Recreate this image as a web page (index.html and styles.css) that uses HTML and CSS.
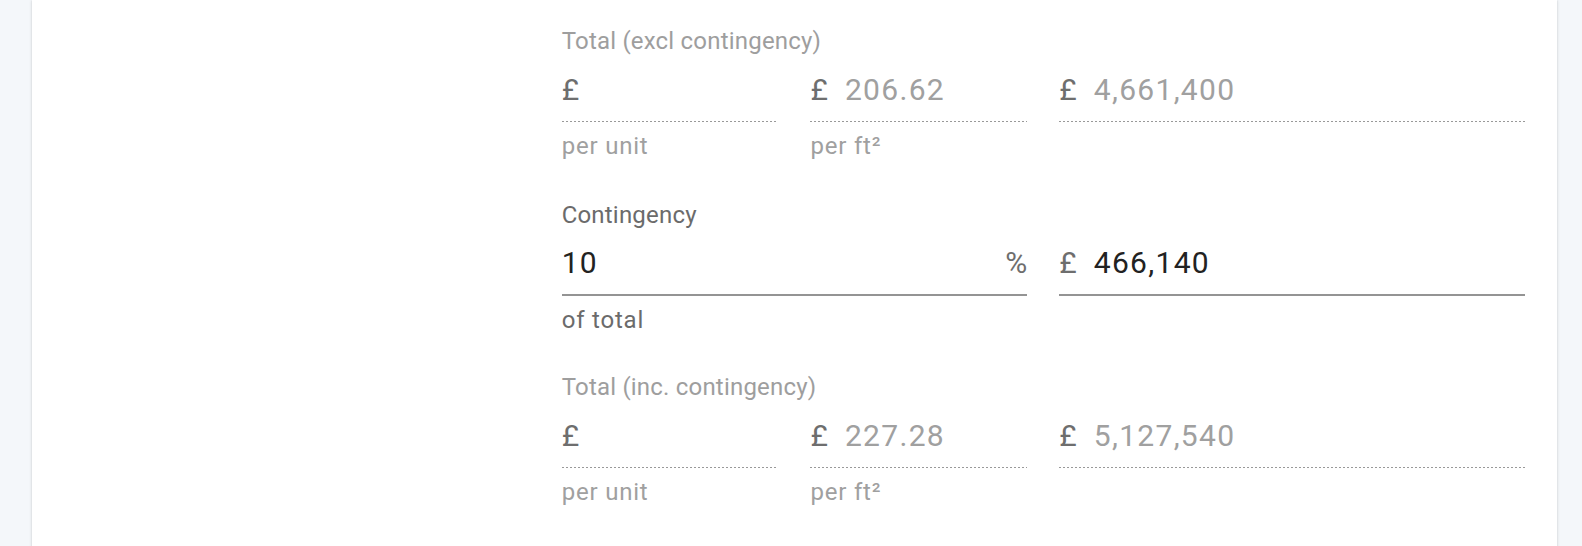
FILE: index.html
```html
<!DOCTYPE html>
<html lang="en">
<head>
<meta charset="utf-8">
<title>Costs</title>
<link rel="stylesheet" href="styles.css">
</head>
<body>
<main class="card">
  <section class="section">
    <div class="spacer"></div>
    <div class="group">
      <div class="label label-disabled">Total (excl contingency)</div>
      <div class="pair">
        <div class="field">
          <div class="input-row dotted">
            <span class="prefix">£</span>
            <span class="value value-disabled"></span>
          </div>
          <div class="hint hint-disabled">per unit</div>
        </div>
        <div class="field">
          <div class="input-row dotted">
            <span class="prefix">£</span>
            <span class="value value-disabled">206.62</span>
          </div>
          <div class="hint hint-disabled">per ft²</div>
        </div>
      </div>
    </div>
    <div class="group">
      <div class="label">&nbsp;</div>
      <div class="field">
        <div class="input-row dotted">
          <span class="prefix">£</span>
          <span class="value value-disabled">4,661,400</span>
        </div>
      </div>
    </div>
  </section>

  <section class="section section-contingency">
    <div class="spacer"></div>
    <div class="group">
      <div class="label label-active">Contingency</div>
      <div class="field">
        <div class="input-row solid">
          <span class="value value-active">10</span>
          <span class="suffix">%</span>
        </div>
        <div class="hint hint-active">of total</div>
      </div>
    </div>
    <div class="group">
      <div class="label">&nbsp;</div>
      <div class="field">
        <div class="input-row solid">
          <span class="prefix">£</span>
          <span class="value value-active">466,140</span>
        </div>
      </div>
    </div>
  </section>

  <section class="section">
    <div class="spacer"></div>
    <div class="group">
      <div class="label label-disabled">Total (inc. contingency)</div>
      <div class="pair">
        <div class="field">
          <div class="input-row dotted">
            <span class="prefix">£</span>
            <span class="value value-disabled"></span>
          </div>
          <div class="hint hint-disabled">per unit</div>
        </div>
        <div class="field">
          <div class="input-row dotted">
            <span class="prefix">£</span>
            <span class="value value-disabled">227.28</span>
          </div>
          <div class="hint hint-disabled">per ft²</div>
        </div>
      </div>
    </div>
    <div class="group">
      <div class="label">&nbsp;</div>
      <div class="field">
        <div class="input-row dotted">
          <span class="prefix">£</span>
          <span class="value value-disabled">5,127,540</span>
        </div>
      </div>
    </div>
  </section>
</main>
</body>
</html>
```

FILE: styles.css
```css
html, body {
  margin: 0;
  padding: 0;
  height: 100%;
  overflow: hidden;
}

body {
  background: #f4f7fa;
  font-family: Roboto, "Liberation Sans", Arial, sans-serif;
}

.card {
  margin: 0 25px 0 32px;
  min-height: 600px;
  background: #ffffff;
  box-shadow: 0 0 3px rgba(0, 0, 0, 0.16), 0 1px 1px rgba(0, 0, 0, 0.08);
  padding: 26px 32px 0 32px;
  box-sizing: border-box;
}

.section {
  display: grid;
  grid-template-columns: repeat(3, 1fr);
  column-gap: 32px;
  margin-bottom: 39px;
}

.section-contingency {
  margin-bottom: 37px;
}

.group {
  display: flex;
  flex-direction: column;
  min-width: 0;
}

.pair {
  display: grid;
  grid-template-columns: 1fr 1fr;
  column-gap: 32px;
}

.label {
  font-size: 24px;
  line-height: 30px;
  height: 30px;
  margin-bottom: 14px;
  letter-spacing: 0.2px;
  white-space: nowrap;
}

.label-disabled { color: #9e9e9e; }
.label-active { color: #6b6b6b; }

.input-row {
  display: flex;
  align-items: baseline;
  height: 40px;
  padding-bottom: 11px;
  position: relative;
}

.input-row.dotted::after {
  content: "";
  position: absolute;
  left: 0;
  right: 0;
  bottom: -1px;
  height: 1px;
  background-image: linear-gradient(to right, rgba(0, 0, 0, 0.4) 0, rgba(0, 0, 0, 0.4) 2px, transparent 2px, transparent 4px);
  background-size: 4px 1px;
  background-repeat: repeat-x;
}

.input-row.solid {
  border-bottom: 2px solid #949494;
  padding-bottom: 9px;
}

.section-contingency .label {
  margin-bottom: 13px;
}

.section-contingency .input-row.solid {
  padding-bottom: 11px;
}

.prefix {
  font-size: 30px;
  line-height: 40px;
  color: #6e6e6e;
  margin-right: 17px;
}

.value {
  font-size: 30px;
  line-height: 40px;
  letter-spacing: 1.3px;
  flex: 1;
}

.value-disabled { color: #a0a0a0; }
.value-active { color: #222222; }

.suffix {
  font-size: 30px;
  line-height: 40px;
  color: #6e6e6e;
}

.hint {
  font-size: 24px;
  line-height: 30px;
  letter-spacing: 0.8px;
  margin-top: 10px;
}

.input-row.solid + .hint {
  margin-top: 9px;
}

.hint-disabled { color: #a0a0a0; }
.hint-active { color: #6b6b6b; }
```
